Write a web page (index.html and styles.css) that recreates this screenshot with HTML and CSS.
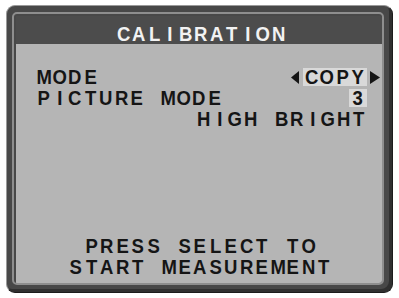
FILE: index.html
```html
<!DOCTYPE html>
<html lang="en">
<head>
<meta charset="utf-8">
<title>Calibration</title>
<link rel="stylesheet" href="styles.css">
</head>
<body>
<div class="frame">
  <div class="ring">
    <div class="header">
      <span class="t"><span>C</span><span>A</span><span>L</span><span>I</span><span>B</span><span>R</span><span>A</span><span>T</span><span>I</span><span>O</span><span>N</span></span>
    </div>
    <div class="body">
      <div class="row">
        <span class="t"><span>M</span><span>O</span><span>D</span><span>E</span></span>
        <span class="val">
          <svg class="arr-l" width="8" height="13" viewBox="0 0 8 13"><polygon points="8,0 8,13 0,6.5"/></svg>
          <span class="t sel"><span>C</span><span>O</span><span>P</span><span>Y</span></span>
          <svg class="arr-r" width="10" height="13" viewBox="0 0 10 13"><polygon points="0,0 0,13 10,6.5"/></svg>
        </span>
      </div>
      <div class="row">
        <span class="t"><span>P</span><span>I</span><span>C</span><span>T</span><span>U</span><span>R</span><span>E</span><span> </span><span>M</span><span>O</span><span>D</span><span>E</span></span>
        <span class="t sel"><span>3</span></span>
      </div>
      <div class="row end">
        <span class="t"><span>H</span><span>I</span><span>G</span><span>H</span><span> </span><span>B</span><span>R</span><span>I</span><span>G</span><span>H</span><span>T</span></span>
      </div>
      <div class="foot">
        <div class="t"><span>P</span><span>R</span><span>E</span><span>S</span><span>S</span><span> </span><span>S</span><span>E</span><span>L</span><span>E</span><span>C</span><span>T</span><span> </span><span>T</span><span>O</span></div>
        <div class="t"><span>S</span><span>T</span><span>A</span><span>R</span><span>T</span><span> </span><span>M</span><span>E</span><span>A</span><span>S</span><span>U</span><span>R</span><span>E</span><span>M</span><span>E</span><span>N</span><span>T</span></div>
      </div>
    </div>
  </div>
</div>
</body>
</html>
```
FILE: styles.css
```css
html, body {
  margin: 0;
  background: #ffffff;
}
body {
  font-family: "Liberation Sans", Arial, sans-serif;
  font-weight: bold;
  font-size: 19.5px;
}
.frame {
  margin: 5px 0 0 6px;
  width: 387px;
  height: 288px;
  box-sizing: border-box;
  background: #484848;
  border: 1px solid;
  border-color: #9a9a9a #1c1c1c #1c1c1c #9a9a9a;
  border-radius: 9px;
  padding: 6px 8px 7px 5px;
  box-shadow: inset -3px -3px 0 #303030;
}
.ring {
  box-sizing: border-box;
  width: 372px;
  height: 273px;
  border: 2px solid #8e8e8e;
  border-radius: 5px;
  padding: 2px 0 0 2px;
  background: #484848;
  display: flex;
  flex-direction: column;
  overflow: hidden;
}
.header {
  height: 28px;
  flex: none;
  box-sizing: border-box;
  padding: 9px 0 0 4px;
  line-height: 19px;
  background: #4c4c4c;
  color: #f2f2f2;
  display: flex;
  justify-content: center;
}
.body {
  flex: 1;
  background: #b5b5b5;
  padding: 22.7px 15.5px 5.3px 20px;
  display: flex;
  flex-direction: column;
  line-height: 21px;
  color: #151515;
}
.t {
  display: inline-flex;
}
.t > span {
  width: 15.5px;
  text-align: center;
  white-space: nowrap;
  transform: scaleX(0.95);
}
.row {
  display: flex;
  justify-content: space-between;
  align-items: baseline;
}
.val {
  display: flex;
  align-items: baseline;
}
.sel {
  height: 18px;
  line-height: 18px;
  padding: 0 1px;
  background: #d9d9d9;
}
.arr-l {
  margin-right: 3.5px;
  fill: #151515;
}
.arr-r {
  margin-left: 3.5px;
  margin-right: -13.5px;
  fill: #151515;
}
.row.end {
  justify-content: flex-end;
}
.foot {
  margin: auto -15.5px 0 -18px;
  display: flex;
  flex-direction: column;
  align-items: center;
}
```
